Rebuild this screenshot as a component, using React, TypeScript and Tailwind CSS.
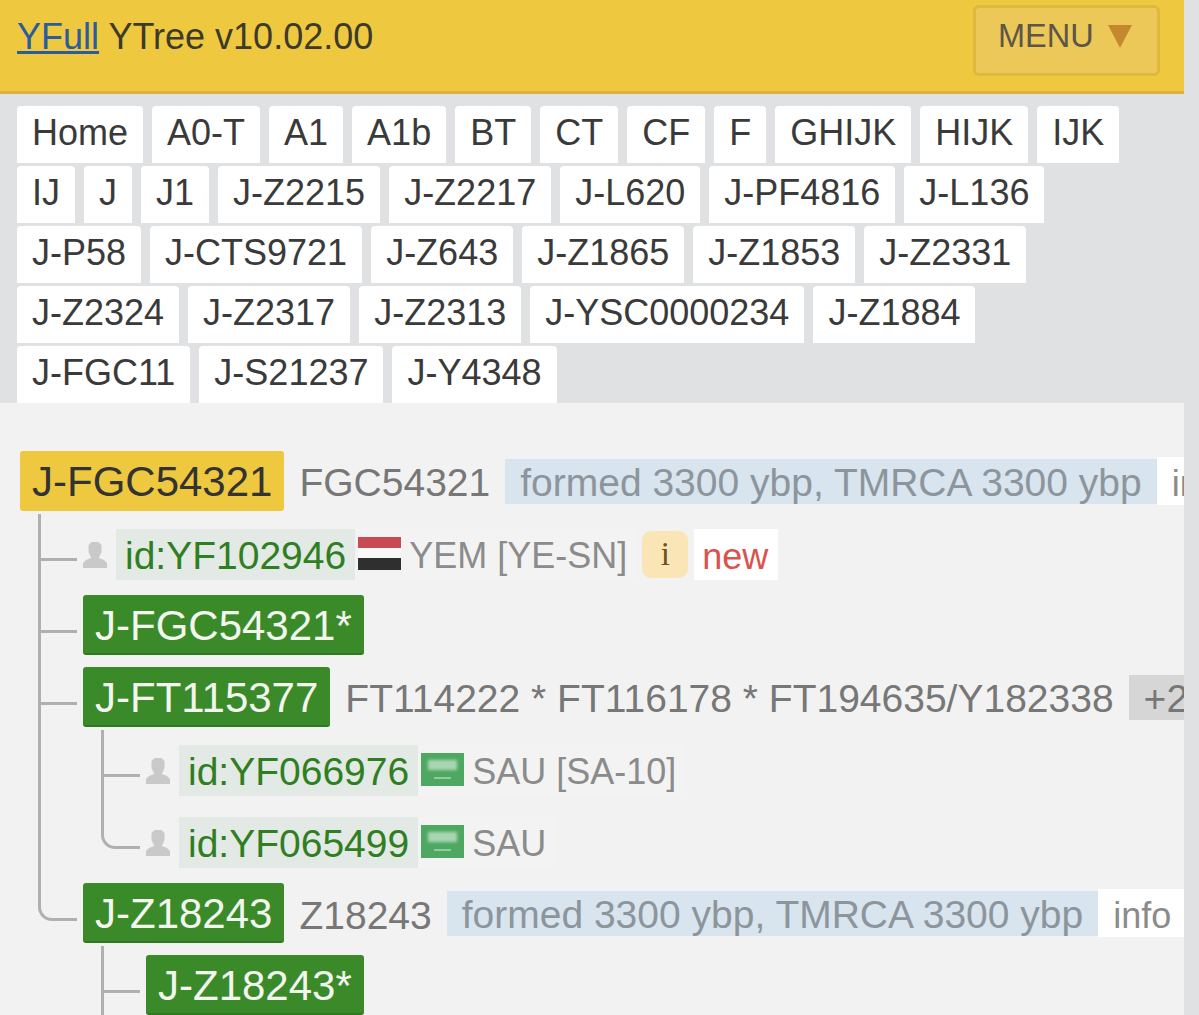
import type { ReactNode } from "react";

const tabRows = [
  "Home", "A0-T", "A1", "A1b", "BT", "CT", "CF", "F", "GHIJK", "HIJK", "IJK",
  "IJ", "J", "J1", "J-Z2215", "J-Z2217", "J-L620", "J-PF4816", "J-L136",
  "J-P58", "J-CTS9721", "J-Z643", "J-Z1865", "J-Z1853", "J-Z2331",
  "J-Z2324", "J-Z2317", "J-Z2313", "J-YSC0000234", "J-Z1884",
  "J-FGC11", "J-S21237", "J-Y4348",
];

const Person = () => (
  <svg width="24" height="26" viewBox="0 0 24 26" className="shrink-0 blur-[0.5px]">
    <path d="M8.500 0h7l3 3v7l-3 6.500h-7L5.500 10V3z" fill="#c9c9c9" />
    <path d="M0 26v-5l3-3 5-2h8l5 2 3 3v5z" fill="#c9c9c9" />
  </svg>
);

const YemenFlag = () => (
  <div className="flex h-[33px] w-[43px] shrink-0 flex-col">
    <div className="h-[11px] bg-[#c84a55]" />
    <div className="h-[10px] bg-[#f8f8f8]" />
    <div className="h-[12px] bg-[#2f2f2f]" />
  </div>
);

const SaudiFlag = () => (
  <svg width="43" height="33" viewBox="0 0 43 33" className="shrink-0">
    <rect width="43" height="33" fill="#4fa862" />
    <rect x="7" y="7" width="29" height="10" fill="#a9d6b2" style={{ filter: "blur(1.5px)" }} />
    <rect x="13" y="24" width="17" height="2" fill="#8fcb9c" />
  </svg>
);

function Sample({ id, flag, country, extra }: { id: string; flag: ReactNode; country: string; extra?: ReactNode }) {
  return (
    <div className="mt-[3px] flex h-[51px] items-center">
      <Person />
      <span className="ml-[9px] flex h-[51px] items-center bg-[#e3e9e5] px-[9px] pt-[2px] text-[39px] leading-none text-[#2f7f22]">
        {id}
      </span>
      <div className="flex h-[51px] items-center bg-[#f3f3f3] pr-[9px]">
        <span className="mb-[2px] ml-[3px]">{flag}</span>
        <span className="ml-[8px] pt-[2px] text-[36px] leading-none text-[#8b8b8b]">{country}</span>
      </div>
      {extra}
    </div>
  );
}

function Badge({ label, gold }: { label: string; gold?: boolean }) {
  return (
    <span
      className={
        gold
          ? "flex h-[60px] shrink-0 items-center rounded-[3px] bg-[#eec940] px-[12px] pt-[2px] text-[42px] leading-none text-[#333333]"
          : "flex h-[60px] shrink-0 items-center rounded-[3px] border-b-2 border-[#2f7a20] bg-[#3b8a2a] px-[12px] pt-[4px] text-[42px] leading-none text-[#f2f6ef]"
      }
    >
      {label}
    </span>
  );
}

function Dating() {
  return (
    <>
      <span className="ml-[15px] mt-[1px] flex h-[45px] shrink-0 items-center bg-[#d8e4ee] px-[15px] pt-[2px] text-[39px] leading-none text-[#8d959c]">
        formed 3300 ybp, TMRCA 3300 ybp
      </span>
      <span className="flex h-[48px] shrink-0 items-center bg-white px-[15px] pt-[6px] text-[36px] leading-none text-[#8b8b8b]">
        info
      </span>
    </>
  );
}

// one tree child: connector on the left, row of 72px, then its own children
function Node({ row, last, kids }: { row: ReactNode; last?: boolean; kids?: ReactNode }) {
  return (
    <li className="relative">
      {last ? (
        <span className="absolute -left-[45px] -top-[3px] h-[47px] w-[39px] rounded-bl-[14px] border-b-[3px] border-l-[3px] border-[#b0b0b0]" />
      ) : (
        <>
          <span className="absolute -left-[45px] -top-[3px] bottom-0 w-[3px] bg-[#b0b0b0]" />
          <span className="absolute -left-[45px] top-[41px] h-[3px] w-[39px] bg-[#b0b0b0]" />
        </>
      )}
      <div className="flex h-[72px] items-center whitespace-nowrap">{row}</div>
      {kids && <ul className="ml-[63px]">{kids}</ul>}
    </li>
  );
}

export default function App() {
  return (
    <div className="h-[1015px] w-[1199px] overflow-hidden bg-[#e0e1e3] font-['Liberation_Sans',Arial,sans-serif]">
      <div className="w-[1184px] overflow-hidden">
        <header className="flex h-[94px] items-start justify-between border-b-[3px] border-[#dfb13a] bg-[#eec940] pl-[17px] pr-[24px]">
          <h1 className="mt-[16px] text-[36px] font-normal leading-[42px] text-[#3d3a2a]">
            <a href="#" className="text-[#2b5c9e] underline">YFull</a> YTree v10.02.00
          </h1>
          <button className="mt-[5px] flex h-[71px] w-[187px] items-center rounded-[6px] border-[3px] border-[#dfb83e] bg-[#ecc858] pb-[8px] pl-[22px] text-[32.500px] leading-none text-[#5c5648]">
            MENU
            <svg width="24" height="23" viewBox="0 0 24 23" className="ml-[14px]">
              <polygon points="0,0 24,0 12,23" fill="#c4882e" />
            </svg>
          </button>
        </header>

        <nav className="flex flex-wrap gap-x-[9px] gap-y-[3px] pl-[17px] pr-[50px] pt-[12px]">
          {tabRows.map((t) => (
            <a key={t} href="#" className="flex h-[57px] items-center rounded-t-[4px] bg-white px-[15px] pb-[4px] text-[36px] leading-none text-[#3a3a3a]">
              {t}
            </a>
          ))}
        </nav>

        <main className="h-[620px] overflow-hidden bg-[#f2f2f2] pl-[20px] pt-[42px]">
          <div className="flex h-[72px] items-center whitespace-nowrap">
            <Badge label="J-FGC54321" gold />
            <span className="ml-[15px] pt-[2px] text-[39px] leading-none text-[#777777]">FGC54321</span>
            <Dating />
          </div>
          <ul className="ml-[63px]">
            <Node
              row={
                <Sample
                  id="id:YF102946"
                  flag={<YemenFlag />}
                  country="YEM [YE-SN]"
                  extra={
                    <>
                      <span className="ml-[6px] flex h-[47px] w-[46px] items-center justify-center rounded-[9px] bg-[#fae5b7] font-['Liberation_Serif',serif] text-[33px] leading-none text-[#6b5020]">
                        i
                      </span>
                      <span className="ml-[6px] flex h-[51px] items-center bg-white pl-[8px] pr-[10px] pt-[4px] text-[36px] leading-none text-[#d9534f]">
                        new
                      </span>
                    </>
                  }
                />
              }
            />
            <Node row={<Badge label="J-FGC54321*" />} />
            <Node
              row={
                <>
                  <Badge label="J-FT115377" />
                  <span className="ml-[15px] pt-[2px] text-[39px] leading-none text-[#777777]">FT114222 * FT116178 * FT194635/Y182338</span>
                  <span className="ml-[15px] flex h-[45px] items-center bg-[#d6d6d6] px-[15px] pt-[2px] text-[39px] leading-none text-[#777777]">+2</span>
                </>
              }
              kids={
                <>
                  <Node row={<Sample id="id:YF066976" flag={<SaudiFlag />} country="SAU [SA-10]" />} />
                  <Node row={<Sample id="id:YF065499" flag={<SaudiFlag />} country="SAU" />} last />
                </>
              }
            />
            <Node
              last
              row={
                <>
                  <Badge label="J-Z18243" />
                  <span className="ml-[15px] pt-[4px] text-[39px] leading-none text-[#777777]">Z18243</span>
                  <Dating />
                </>
              }
              kids={<Node row={<Badge label="J-Z18243*" />} />}
            />
          </ul>
        </main>
      </div>
    </div>
  );
}
